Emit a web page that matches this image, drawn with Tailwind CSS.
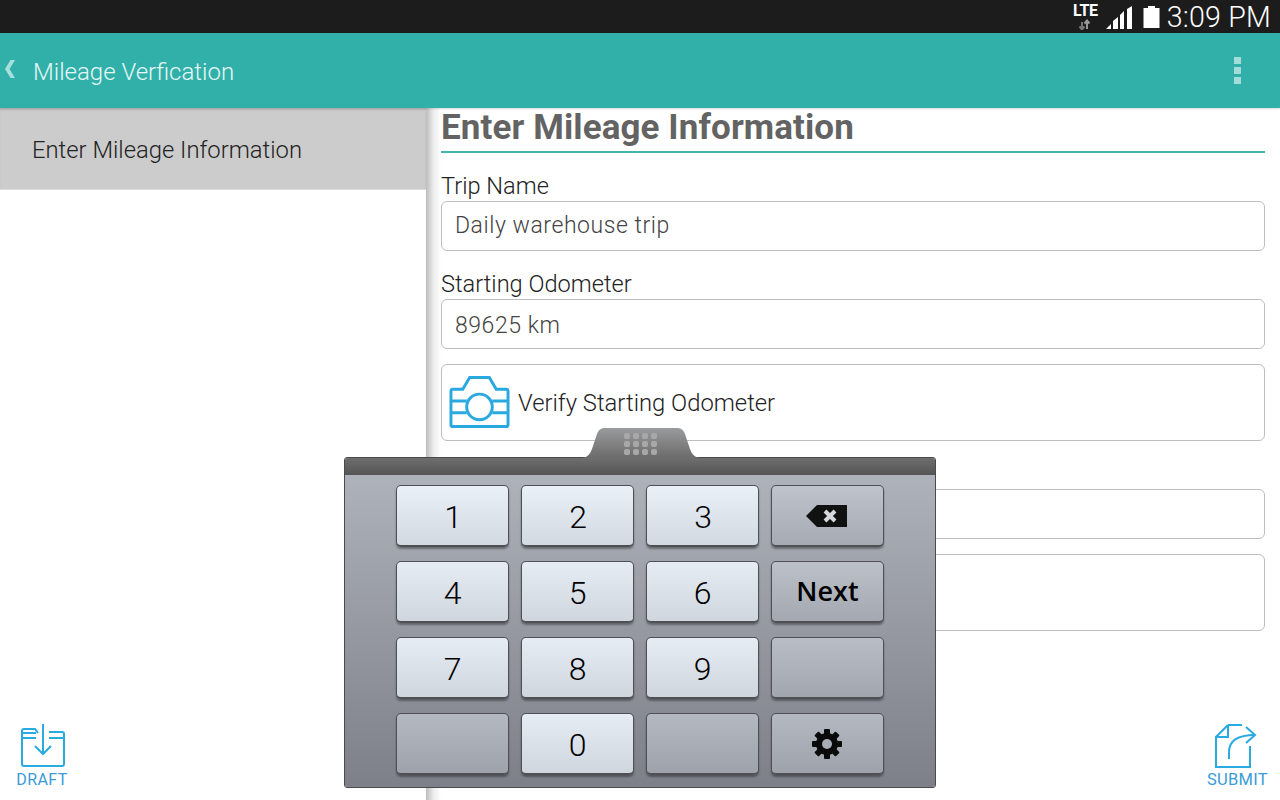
<!DOCTYPE html>
<html lang="en">
<head>
  <meta charset="UTF-8" />
  <title>Mileage Verfication</title>
  <script src="https://cdn.jsdelivr.net/npm/@tailwindcss/browser@4"></script>
</head>
<body class="bg-white font-['Roboto',sans-serif]">
  <div class="relative w-[1280px] h-[800px] overflow-hidden flex flex-col">

    <!-- status bar -->
    <div class="h-[33px] bg-[#1c1c1c] flex items-center justify-end pr-[9px] text-white shrink-0">
      <div class="flex flex-col items-center mr-[8px] mt-[-1px]">
        <span class="text-[16px] leading-[15px] font-bold tracking-[-0.4px]">LTE</span>
        <svg width="16" height="11" viewBox="0 0 16 11" class="mt-[1px]">
          <path d="M5 10V3M2.500 7.500L5 10.500L7.500 7.500" fill="none" stroke="#777" stroke-width="2"/>
          <path d="M10 10V2M7.500 4.500L10 1.500L12.500 4.500" fill="none" stroke="#999" stroke-width="2"/>
        </svg>
      </div>
      <svg width="26" height="24" viewBox="0 0 26 24" class="mr-[11px] mt-[3px]">
        <path d="M0 23L5 18V23Z M7 23V15L12 11V23Z M14 23V9L18 5V23Z M21 23V3L26 0V23Z" fill="#fff"/>
      </svg>
      <svg width="17" height="22" viewBox="0 0 17 22" class="mr-[7px]">
        <path d="M5 0H12V2H16.500V22H0.500V2H5Z" fill="#fff"/>
      </svg>
      <span class="text-[28.6px] leading-none font-light tracking-[0.2px] mt-[2px]">3:09 PM</span>
    </div>

    <!-- action bar -->
    <div class="h-[75px] bg-[#31b0a9] flex items-center shrink-0 z-10 shadow-[0_1px_2px_rgba(0,0,0,0.15)]">
      <svg width="12" height="18" viewBox="0 0 12 18" class="ml-[4px] mt-[-4px]">
        <path d="M11 0L5.500 9L11 18H6.500L1 9L6.500 0Z" fill="#a8dedb"/>
      </svg>
      <span class="ml-[17px] text-[24px] font-light text-[#e6f7f6] leading-none mt-[2px]">Mileage Verfication</span>
      <div class="ml-auto mr-[39px] flex flex-col gap-[3px] mt-[-1px]">
        <div class="w-[7px] h-[7px] bg-[#a3dcd8]"></div>
        <div class="w-[7px] h-[7px] bg-[#a3dcd8]"></div>
        <div class="w-[7px] h-[7px] bg-[#a3dcd8]"></div>
      </div>
    </div>

    <div class="flex flex-1 min-h-0">
      <!-- left menu -->
      <div class="w-[426px] shrink-0 flex flex-col">
        <div class="h-[82px] bg-[#cccccc] border-b border-[#dcdcdc] flex items-center pl-[32px] pt-[4px] text-[23.8px] font-light text-[#222] shadow-[inset_0_2px_2px_rgba(0,0,0,0.08)]">Enter Mileage Information</div>
        <div class="mt-auto pb-[11px] pl-[16px] w-[52px] box-content flex flex-col items-center">
          <svg width="46" height="44" viewBox="0 0 46 44" fill="none" stroke="#29abe2" stroke-width="2" class="ml-[2px]">
            <path d="M16 9H3Q2 9 2 10V40Q2 42 4 42H42Q44 42 44 40V10Q44 8 42 8H29"/>
            <path d="M2 10V7Q2 5 4 5H15L18 9"/>
            <path d="M2 14H16M29 14H44"/>
            <path d="M23 0V30M15 22L23 30L31 22"/>
          </svg>
          <span class="text-[16px] leading-[18px] mt-[3px] text-[#3a9bd9] tracking-[0.4px]">DRAFT</span>
        </div>
      </div>

      <!-- divider -->
      <div class="w-[15px] shrink-0 bg-gradient-to-r from-[#bdbdbd] via-[#ececec] to-white"></div>

      <!-- form -->
      <div class="flex-1 flex flex-col pr-[15px] min-w-0">
        <h1 class="h-[45px] border-b-2 border-[#3fb5ae] pt-[1px] text-[35px] leading-[38px] font-bold text-[#636363] tracking-[0.1px]">Enter Mileage Information</h1>

        <label class="mt-[20px] text-[23.6px] leading-[26px] font-light text-[#222]">Trip Name</label>
        <div class="mt-[2px] h-[50px] border border-[#bdbdbd] rounded-[6px] flex items-center pl-[13px] text-[23px] text-[#444] font-light tracking-[0.55px]">Daily warehouse trip</div>

        <label class="mt-[20px] text-[23.6px] leading-[26px] font-light text-[#222]">Starting Odometer</label>
        <div class="mt-[2px] h-[50px] border border-[#bdbdbd] rounded-[6px] flex items-center pl-[13px] pt-[4px] text-[23px] text-[#444] font-light tracking-[0.55px]">89625 km</div>

        <div class="mt-[15px] h-[77px] border border-[#bdbdbd] rounded-[6px] flex items-center pl-[7px] text-[23.8px] font-light text-[#222]">
          <svg width="61" height="54" viewBox="0 0 62 54" fill="none" stroke="#29a9e0" stroke-width="3" class="mr-[8px] mt-[-1px] shrink-0">
            <path d="M2 16Q2 14 4 14H14L21 2H41L48 14H58Q60 14 60 16V50Q60 52 58 52H4Q2 52 2 50Z"/>
            <circle cx="31" cy="32" r="13"/>
            <path d="M2 26H18M44 26H60M2 38H18M44 38H60"/>
          </svg>
          <span class="mt-[3px]">Verify Starting Odometer</span>
        </div>

        <div class="mt-[48px] h-[50px] border border-[#bdbdbd] rounded-[6px]"></div>
        <div class="mt-[15px] h-[77px] border border-[#bdbdbd] rounded-[6px]"></div>

        <div class="mt-auto pb-[11px] self-end flex flex-col items-center mr-[-3px]">
          <svg width="44" height="44" viewBox="0 0 44 44" fill="none" stroke="#29abe2" stroke-width="2" class="mr-[2px]">
            <path d="M14 1L2 13V43H36V22"/>
            <path d="M14 1V13H2"/>
            <path d="M14 1H28"/>
            <path d="M15 35V28C15 17 23 11 41 11"/>
            <path d="M32 3L41 11L32 19"/>
          </svg>
          <span class="text-[16.500px] leading-[18px] mt-[3px] text-[#3a9bd9] tracking-[0.3px]">SUBMIT</span>
        </div>
      </div>
    </div>

    <!-- floating number keypad -->
    <div class="absolute left-[344px] top-[427px] w-[592px]">
      <div class="relative h-[30px]">
        <svg width="118" height="31" viewBox="0 0 118 31" class="absolute left-[238px] top-0">
          <defs>
            <linearGradient id="tabFill" x1="0" y1="0" x2="0" y2="1">
              <stop offset="0" stop-color="#9a9b9d"/>
              <stop offset="1" stop-color="#6b6b6b"/>
            </linearGradient>
          </defs>
          <path d="M0 31C6 30 8 27 10 22L15 7C17 2 19 1 24 1H94C99 1 101 2 103 7L108 22C110 27 112 30 118 31Z" fill="url(#tabFill)"/>
        </svg>
        <div class="absolute left-[280px] top-[6px] grid grid-cols-4 gap-x-[3px] gap-y-[2px]">
          <span class="w-[6px] h-[6px] rounded-[2px] bg-[#a8a8a8]"></span><span class="w-[6px] h-[6px] rounded-[2px] bg-[#a8a8a8]"></span><span class="w-[6px] h-[6px] rounded-[2px] bg-[#a8a8a8]"></span><span class="w-[6px] h-[6px] rounded-[2px] bg-[#a8a8a8]"></span>
          <span class="w-[6px] h-[6px] rounded-[2px] bg-[#a8a8a8]"></span><span class="w-[6px] h-[6px] rounded-[2px] bg-[#a8a8a8]"></span><span class="w-[6px] h-[6px] rounded-[2px] bg-[#a8a8a8]"></span><span class="w-[6px] h-[6px] rounded-[2px] bg-[#a8a8a8]"></span>
          <span class="w-[6px] h-[6px] rounded-[2px] bg-[#a8a8a8]"></span><span class="w-[6px] h-[6px] rounded-[2px] bg-[#a8a8a8]"></span><span class="w-[6px] h-[6px] rounded-[2px] bg-[#a8a8a8]"></span><span class="w-[6px] h-[6px] rounded-[2px] bg-[#a8a8a8]"></span>
        </div>
      </div>
      <div class="rounded-[3px] border border-[#4a4a4a] overflow-hidden h-[331px] flex flex-col">
        <div class="h-[17px] shrink-0 bg-gradient-to-b from-[#6e6e6e] to-[#555]"></div>
        <div class="flex-1 bg-gradient-to-b from-[#aeb2ba] to-[#7d8089] pl-[51px] pt-[10px]">
          <div class="grid grid-cols-[113px_113px_113px_113px] grid-rows-[62px_62px_62px_62px] gap-x-[12px] gap-y-[14px] text-[32px] font-light text-black">
            <div class="flex items-center justify-center pt-[2px] pl-[1px] rounded-[5px] border border-[#4e5055] border-b-2 bg-gradient-to-b from-[#eaf0f7] to-[#d3d9e0] shadow-[0_2px_2px_rgba(0,0,0,0.35)]">1</div>
            <div class="flex items-center justify-center pt-[2px] pl-[1px] rounded-[5px] border border-[#4e5055] border-b-2 bg-gradient-to-b from-[#eaf0f7] to-[#d3d9e0] shadow-[0_2px_2px_rgba(0,0,0,0.35)]">2</div>
            <div class="flex items-center justify-center pt-[2px] pl-[1px] rounded-[5px] border border-[#4e5055] border-b-2 bg-gradient-to-b from-[#eaf0f7] to-[#d3d9e0] shadow-[0_2px_2px_rgba(0,0,0,0.35)]">3</div>
            <div class="flex items-center justify-center rounded-[5px] border border-[#4e5055] border-b-2 bg-gradient-to-b from-[#bfc4cc] to-[#a6abb3] shadow-[0_2px_2px_rgba(0,0,0,0.35)]">
              <svg width="42" height="24" viewBox="0 0 42 24" class="mr-[2px]">
                <path d="M0 12L11 1H41V23H11Z" fill="#111"/>
                <path d="M19 7L29 17M29 7L19 17" stroke="#d5d8dd" stroke-width="4" fill="none"/>
              </svg>
            </div>

            <div class="flex items-center justify-center pt-[2px] rounded-[5px] border border-[#4e5055] border-b-2 bg-gradient-to-b from-[#e6ecf3] to-[#d0d6dd] shadow-[0_2px_2px_rgba(0,0,0,0.35)]">4</div>
            <div class="flex items-center justify-center pt-[2px] rounded-[5px] border border-[#4e5055] border-b-2 bg-gradient-to-b from-[#e6ecf3] to-[#d0d6dd] shadow-[0_2px_2px_rgba(0,0,0,0.35)]">5</div>
            <div class="flex items-center justify-center pt-[2px] rounded-[5px] border border-[#4e5055] border-b-2 bg-gradient-to-b from-[#e6ecf3] to-[#d0d6dd] shadow-[0_2px_2px_rgba(0,0,0,0.35)]">6</div>
            <div class="flex items-center justify-center rounded-[5px] border border-[#4e5055] border-b-2 bg-gradient-to-b from-[#bcc1c9] to-[#a4a9b1] shadow-[0_2px_2px_rgba(0,0,0,0.35)] text-[27px] font-[550] font-['Open_Sans',sans-serif]">Next</div>

            <div class="flex items-center justify-center pt-[2px] rounded-[5px] border border-[#4e5055] border-b-2 bg-gradient-to-b from-[#e6ecf3] to-[#d0d6dd] shadow-[0_2px_2px_rgba(0,0,0,0.35)]">7</div>
            <div class="flex items-center justify-center pt-[2px] rounded-[5px] border border-[#4e5055] border-b-2 bg-gradient-to-b from-[#e6ecf3] to-[#d0d6dd] shadow-[0_2px_2px_rgba(0,0,0,0.35)]">8</div>
            <div class="flex items-center justify-center pt-[2px] rounded-[5px] border border-[#4e5055] border-b-2 bg-gradient-to-b from-[#e6ecf3] to-[#d0d6dd] shadow-[0_2px_2px_rgba(0,0,0,0.35)]">9</div>
            <div class="rounded-[5px] border border-[#4e5055] border-b-2 bg-gradient-to-b from-[#b9bec6] to-[#a2a7af] shadow-[0_2px_2px_rgba(0,0,0,0.35)]"></div>

            <div class="rounded-[5px] border border-[#4e5055] border-b-2 bg-gradient-to-b from-[#b4b9c1] to-[#9ea3ab] shadow-[0_2px_2px_rgba(0,0,0,0.35)]"></div>
            <div class="flex items-center justify-center pt-[2px] rounded-[5px] border border-[#4e5055] border-b-2 bg-gradient-to-b from-[#e6ecf3] to-[#d0d6dd] shadow-[0_2px_2px_rgba(0,0,0,0.35)]">0</div>
            <div class="rounded-[5px] border border-[#4e5055] border-b-2 bg-gradient-to-b from-[#b4b9c1] to-[#9ea3ab] shadow-[0_2px_2px_rgba(0,0,0,0.35)]"></div>
            <div class="flex items-center justify-center rounded-[5px] border border-[#4e5055] border-b-2 bg-gradient-to-b from-[#b4b9c1] to-[#9ea3ab] shadow-[0_2px_2px_rgba(0,0,0,0.35)]">
              <svg width="32" height="32" viewBox="0 0 32 32" class="mr-[2px]">
                <g fill="#0a0a0a">
                  <rect x="13" y="1" width="6" height="30" rx="1"/>
                  <rect x="13" y="1" width="6" height="30" rx="1" transform="rotate(45 16 16)"/>
                  <rect x="13" y="1" width="6" height="30" rx="1" transform="rotate(90 16 16)"/>
                  <rect x="13" y="1" width="6" height="30" rx="1" transform="rotate(135 16 16)"/>
                </g>
                <circle cx="16" cy="16" r="8.500" fill="none" stroke="#0a0a0a" stroke-width="5"/>
                <circle cx="16" cy="16" r="5" fill="#a9aeb6"/>
              </svg>
            </div>
          </div>
        </div>
      </div>
    </div>
  </div>
</body>
</html>
